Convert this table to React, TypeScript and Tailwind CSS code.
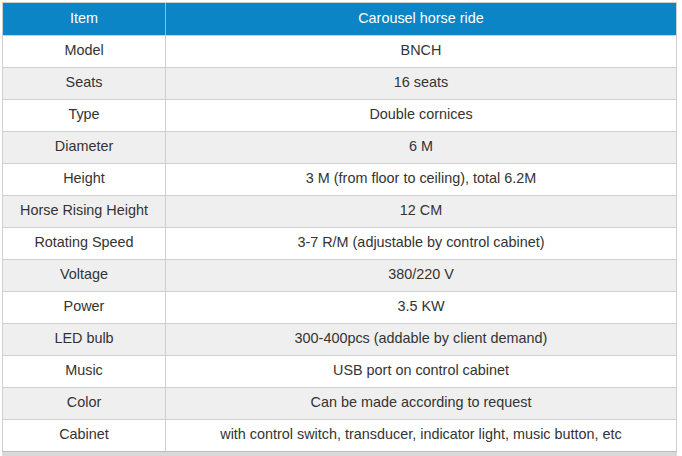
import React from "react";

const rows: [string, string][] = [
  ["Model", "BNCH"],
  ["Seats", "16 seats"],
  ["Type", "Double cornices"],
  ["Diameter", "6 M"],
  ["Height", "3 M (from floor to ceiling), total 6.2M"],
  ["Horse Rising Height", "12 CM"],
  ["Rotating Speed", "3-7 R/M (adjustable by control cabinet)"],
  ["Voltage", "380/220 V"],
  ["Power", "3.5 KW"],
  ["LED bulb", "300-400pcs (addable by client demand)"],
  ["Music", "USB port on control cabinet"],
  ["Color", "Can be made according to request"],
  ["Cabinet", "with control switch, transducer, indicator light, music button, etc"],
];

export default function App() {
  return (
    <div
      className="w-[682px] h-[456px] bg-white overflow-hidden pt-[2px] pl-[2px]"
      style={{ fontFamily: '"Liberation Sans", Arial, sans-serif' }}
    >
      <div className="w-[675px] border border-[#cfcfcf] border-b-0 text-[14.4px] text-[#333]">
        <div className="flex h-[32px] bg-[#0b85c6] text-white">
          <div className="w-[163px] flex items-center justify-center pb-[1px] border-r border-[#7cc3ea]">Item</div>
          <div className="flex-1 flex items-center justify-center pb-[1px]">Carousel horse ride</div>
        </div>
        {rows.map(([k, v], i) => (
          <div
            key={k}
            className={
              "flex h-[32px] border-t border-[#cfcfcf] " +
              (i % 2 === 1 ? "bg-[#efefef]" : "bg-white")
            }
          >
            <div className="w-[163px] flex items-center justify-center pb-[2px] border-r border-[#cfcfcf]">{k}</div>
            <div className="flex-1 flex items-center justify-center pb-[2px]">{v}</div>
          </div>
        ))}
      </div>
      <div className="w-[675px] h-[6px] border-t border-[#bdbdbd] bg-[#d9d9d9]" />
    </div>
  );
}
